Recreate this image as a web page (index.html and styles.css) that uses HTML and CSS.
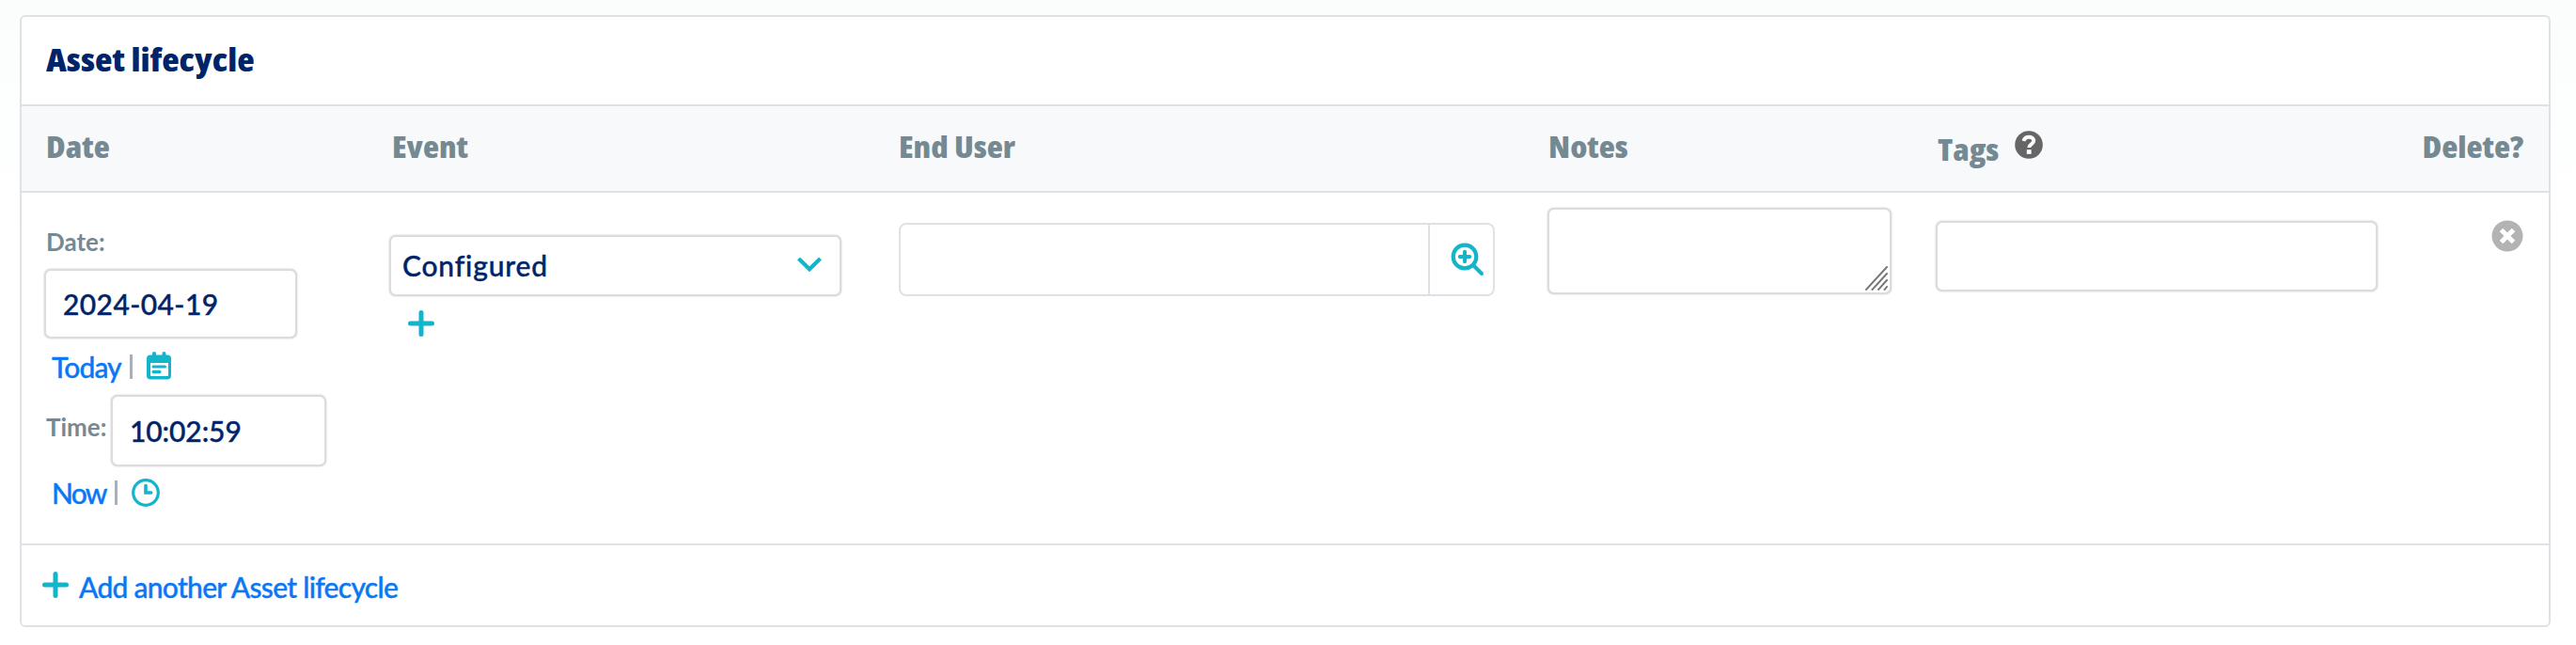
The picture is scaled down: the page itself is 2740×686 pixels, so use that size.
FILE: index.html
```html
<!DOCTYPE html>
<html lang="en">
<head>
<meta charset="utf-8">
<title>Asset lifecycle</title>
<link rel="stylesheet" href="styles.css">
</head>
<body>
<section class="card">
  <header class="card-title"><h2>Asset lifecycle</h2></header>
  <div class="row head">
    <div class="cell c-date"><span class="th">Date</span></div>
    <div class="cell c-event"><span class="th">Event</span></div>
    <div class="cell"><span class="th">End User</span></div>
    <div class="cell"><span class="th">Notes</span></div>
    <div class="cell tags-head"><span class="th">Tags</span>
      <svg class="help" width="30" height="30" viewBox="0 0 30 30"><circle cx="15" cy="15" r="14.8" fill="#666"/><path d="M9.500 11C10.200 8 12.300 6.800 15 6.800c3 0 5.200 1.500 5.200 4 0 3.600-5 3.400-5 7.200" fill="none" stroke="#fff" stroke-width="4"/><rect x="12.800" y="20.200" width="4.800" height="4.600" fill="#fff"/></svg>
    </div>
    <div class="cell c-del"><span class="th">Delete?</span></div>
  </div>
  <div class="row body">
    <div class="cell datetime">
      <label class="lbl">Date:</label>
      <div class="input date"><span>2024-04-19</span></div>
      <div class="links today"><a>Today</a><i class="bar"></i>
        <svg class="cal" width="26" height="30" viewBox="0 0 26 30"><g fill="#12b5c9"><rect x="6" y="0" width="4" height="7" rx="2"/><rect x="16.500" y="0" width="4" height="7" rx="2"/><path fill-rule="evenodd" d="M4 3.500H22a4 4 0 0 1 4 4V25.500a4 4 0 0 1-4 4H4a4 4 0 0 1-4-4V7.500a4 4 0 0 1 4-4ZM4 12V25a1 1 0 0 0 1 1H22a1 1 0 0 0 1-1V12Z"/><rect x="5.500" y="14.500" width="15.500" height="3" rx="1.500"/><rect x="5.500" y="19.800" width="10" height="3.400" rx="1.700"/></g></svg>
      </div>
      <div class="time-line"><label class="lbl">Time:</label><div class="input time"><span>10:02:59</span></div></div>
      <div class="links now"><a>Now</a><i class="bar"></i>
        <svg class="clock" width="30" height="30" viewBox="0 0 30 30" fill="none" stroke="#12b5c9"><circle cx="15" cy="15" r="13.300" stroke-width="3.200"/><path d="M15 7.500V15H20.700" stroke-width="3.600" stroke-linecap="round"/></svg>
      </div>
    </div>
    <div class="cell">
      <div class="input select"><span>Configured</span>
        <svg width="26" height="17" viewBox="0 0 26 17"><path d="M1.500 2 13 13.200 24.500 2" fill="none" stroke="#12b5c9" stroke-width="4.200"/></svg></div>
      <svg class="plus-event" width="28" height="28" viewBox="0 0 28 28"><path d="M14 2.500V25.500M2.500 14H25.500" stroke="#12b5c9" stroke-width="5" stroke-linecap="round"/></svg>
    </div>
    <div class="cell">
      <div class="lookup"><div class="lookup-value"></div><div class="lookup-btn">
        <svg width="36" height="36" viewBox="0 0 36 36" fill="none" stroke="#12b5c9"><circle cx="15" cy="15" r="12.300" stroke-width="4.200"/><path d="M24.500 24.500 33 33" stroke-width="4" stroke-linecap="round"/><path d="M15 9.800V20.200M9.800 15H20.200" stroke-width="4" stroke-linecap="round"/></svg></div></div>
    </div>
    <div class="cell">
      <div class="input notes"><svg width="24" height="26" viewBox="0 0 24 26"><path d="M1 25 23 1M7.500 25 23 8M14 25 23 15M20.500 25 23 22" stroke="#777" stroke-width="1.900" stroke-linecap="square"/></svg></div>
    </div>
    <div class="cell"><div class="input tags"></div></div>
    <div class="cell c-del">
      <svg class="remove" width="34" height="34" viewBox="0 0 34 34"><circle cx="17" cy="17" r="16.500" fill="#b3b3b3"/><path d="M10.500 10.500 23.500 23.500M23.500 10.500 10.500 23.500" stroke="#fff" stroke-width="5"/></svg>
    </div>
  </div>
  <footer class="add">
    <svg width="28" height="28" viewBox="0 0 28 28"><path d="M14 2.500V25.500M2.500 14H25.500" stroke="#12b5c9" stroke-width="5" stroke-linecap="round"/></svg>
    <a>Add another Asset lifecycle</a>
  </footer>
</section>
</body>
</html>
```
FILE: styles.css
```css
* { box-sizing: border-box; }
body { margin: 0; height: 686px; padding: 16px 27px 0 21px; background: linear-gradient(#fbfdfd, #fff 240px); font: 500 30px/36px Lato, sans-serif; color: #002469; overflow: hidden; }
.card { height: 651px; border: 2px solid #dee2e7; border-radius: 6px; background: #fff; display: flex; flex-direction: column; overflow: hidden; }
.card-title { height: 95px; border-bottom: 2px solid #dee2e7; padding: 23px 0 0 26px; }
h2, .th { display: inline-block; font-family: "Open Sans", sans-serif; font-weight: 800; font-stretch: 75%; white-space: nowrap; transform: scaleX(1.12); transform-origin: left; }
h2 { margin: 0; font-size: 34px; line-height: 44px; }
.th { font-size: 31.5px; line-height: 40px; color: #758993; }
.row { display: grid; grid-template-columns: 391px 541px 691px 412px 488px 1fr; }
.head { height: 92px; background: #f8f9fb; border-bottom: 2px solid #dee2e7; padding-top: 23px; }
.head .cell { padding-left: 1px; }
.row .c-date { padding-left: 26px; }
.head .c-event { padding-left: 3px; }
.head .tags-head { display: flex; padding: 3px 0 0 3px; }
.help { margin: 0 0 0 24px; }
.row .c-del { text-align: right; padding-right: 27px; }
.c-del .th { transform-origin: right; }
.body { height: 375px; border-bottom: 2px solid #dee2e7; }
.input { background: #fff; border: 2px solid #dcdcdc; border-radius: 7px; box-shadow: 0 0 2px #c4c4c4; display: flex; align-items: center; white-space: nowrap; }
.input span, .links a, .add a { -webkit-text-stroke: 0.4px currentColor; }
.input span { margin-top: -1px; }
.datetime { padding: 34px 0 0 24px; }
.lbl { display: block; padding-left: 2px; font-size: 26px; font-weight: 700; color: #758993; line-height: 36px; white-space: nowrap; }
.date { width: 269px; height: 74px; margin-top: 11px; padding-left: 18px; letter-spacing: 0.4px; }
.links { display: flex; align-items: center; padding-left: 8px; color: #0a78f5; white-space: nowrap; height: 32px; letter-spacing: -0.9px; }
.links a { margin-top: -1px; }
.today { margin-top: 14px; }
.bar { width: 3px; height: 26px; background: #a7b0b8; margin-left: 9px; }
.cal { margin-left: 15px; margin-top: -2px; }
.time-line { display: flex; margin-top: 14px; }
.time-line .lbl { width: 71px; padding-top: 16px; }
.time { width: 229px; height: 76px; padding-left: 18px; letter-spacing: -0.1px; }
.now { margin-top: 12px; }
.now a { letter-spacing: -1.8px; }
.clock { margin-left: 15px; }
.select { width: 481px; height: 65px; margin: 45px 0 0; padding: 0 19px 0 12px; justify-content: space-between; letter-spacing: 0.8px; }
.select svg { margin-top: -2px; }
.plus-event { display: block; margin: 15px 0 0 20px; }
.lookup { width: 634px; height: 78px; margin: 32px 0 0 1px; border: 2px solid #dee2e7; border-radius: 8px; display: flex; }
.lookup-value { width: 561px; }
.lookup-btn { flex: 1; border-left: 2px solid #dee2e7; display: flex; padding: 19px 0 0 22px; }
.notes { width: 366px; height: 92px; margin: 16px 0 0; align-items: flex-end; justify-content: flex-end; padding: 0 2px 2px 0; }
.tags { width: 470px; height: 75px; margin: 30px 0 0 1px; }
.remove { margin-top: 29px; }
.add { display: flex; padding: 28px 0 0 22px; color: #0a78f5; letter-spacing: -0.72px; }
.add a { margin: -2px 0 0 11px; white-space: nowrap; }
```
